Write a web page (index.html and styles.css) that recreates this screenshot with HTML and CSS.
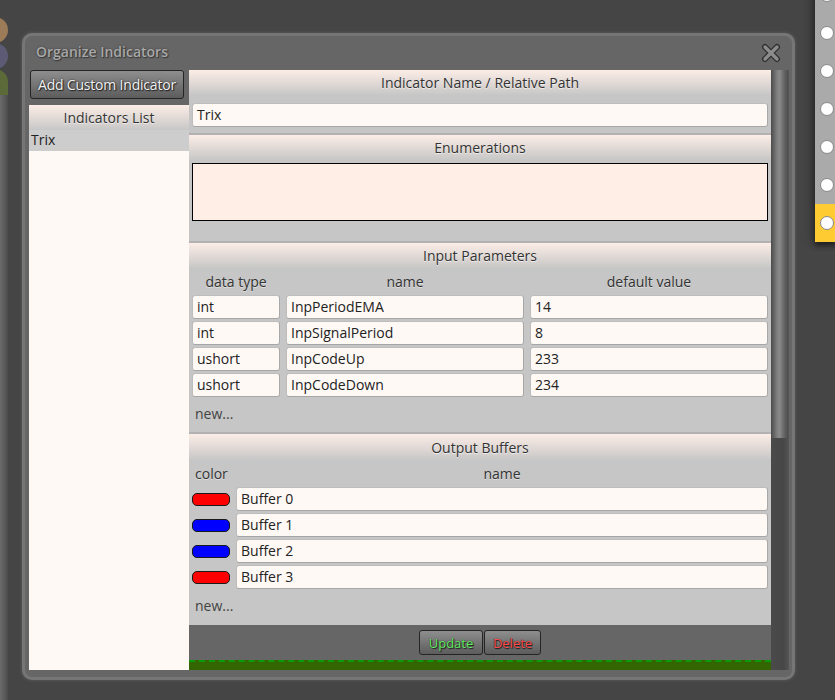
FILE: index.html
```html
<!DOCTYPE html>
<html>
<head>
<meta charset="utf-8">
<link rel="stylesheet" href="styles.css">
</head>
<body>
<div class="deco-left">
  <div class="dot dot-brown"></div>
  <div class="dot dot-purple"></div>
  <div class="dot-green"></div>
  <div class="strip-left"></div>
</div>

<div class="pins">
  <div class="pin"><span class="pin-dot"></span></div>
  <div class="pin"><span class="pin-dot"></span></div>
  <div class="pin"><span class="pin-dot"></span></div>
  <div class="pin"><span class="pin-dot"></span></div>
  <div class="pin"><span class="pin-dot"></span></div>
  <div class="pin"><span class="pin-dot"></span></div>
  <div class="pin pin-active"><span class="pin-dot"></span></div>
</div>

<div class="dialog">
  <div class="titlebar">
    <span class="title">Organize Indicators</span>
    <svg class="close" width="20" height="20" viewBox="0 0 20 20">
      <path d="M4 4 L16 16 M16 4 L4 16" stroke="#2e2e2e" stroke-width="6" stroke-linecap="round"/>
      <path d="M4 4 L16 16 M16 4 L4 16" stroke="#8c8c8c" stroke-width="3.4" stroke-linecap="round"/>
    </svg>
  </div>
  <div class="body">
    <div class="leftcol">
      <button class="btn btn-add">Add Custom Indicator</button>
      <div class="list">
        <div class="hdr">Indicators List</div>
        <div class="list-item selected">Trix</div>
      </div>
    </div>

    <div class="main">
      <div class="section s-name">
        <div class="hdr">Indicator Name / Relative Path</div>
        <div class="s-body name-body">
          <div class="field">Trix</div>
        </div>
      </div>

      <div class="section s-enum">
        <div class="hdr">Enumerations</div>
        <div class="s-body enum-body">
          <div class="enum-area"></div>
        </div>
      </div>

      <div class="section s-params">
        <div class="hdr">Input Parameters</div>
        <div class="grid3 labels">
          <span>data type</span><span>name</span><span>default value</span>
        </div>
        <div class="rows">
          <div class="grid3"><div class="field">int</div><div class="field">InpPeriodEMA</div><div class="field">14</div></div>
          <div class="grid3"><div class="field">int</div><div class="field">InpSignalPeriod</div><div class="field">8</div></div>
          <div class="grid3"><div class="field">ushort</div><div class="field">InpCodeUp</div><div class="field">233</div></div>
          <div class="grid3"><div class="field">ushort</div><div class="field">InpCodeDown</div><div class="field">234</div></div>
        </div>
        <div class="newrow">new...</div>
      </div>

      <div class="section s-buffers">
        <div class="hdr hdr-tall">Output Buffers</div>
        <div class="grid2 labels">
          <span class="lbl-left">color</span><span>name</span>
        </div>
        <div class="rows">
          <div class="grid2"><span class="swatch red"></span><div class="field">Buffer 0</div></div>
          <div class="grid2"><span class="swatch blue"></span><div class="field">Buffer 1</div></div>
          <div class="grid2"><span class="swatch blue"></span><div class="field">Buffer 2</div></div>
          <div class="grid2"><span class="swatch red"></span><div class="field">Buffer 3</div></div>
        </div>
        <div class="newrow newrow-b">new...</div>
      </div>

      <div class="footer">
        <button class="btn btn-sm btn-update">Update</button>
        <button class="btn btn-sm btn-delete">Delete</button>
      </div>
      <div class="greenbar"></div>
    </div>

    <div class="scrollbar"><div class="thumb"></div></div>
  </div>
</div>
</body>
</html>
```

FILE: styles.css
```css
* { box-sizing: border-box; }

html, body {
  margin: 0;
  padding: 0;
}

body {
  width: 835px;
  height: 700px;
  overflow: hidden;
  position: relative;
  background: #454545;
  font-family: "Open Sans", "Noto Sans", sans-serif;
  font-size: 14px;
  color: #333;
}

/* left decorations (canvas items) */
.deco-left { position: absolute; left: 0; top: 0; width: 10px; height: 700px; }
.dot { position: absolute; width: 26px; height: 26px; border-radius: 50%; left: -18px; }
.dot-brown { top: 17px; background: #9c7b58; }
.dot-purple { top: 43px; background: #5b5b75; }
.dot-green {
  position: absolute; left: -18px; top: 69px; width: 26px; height: 26px;
  border-radius: 13px 13px 0 0; background: #5b6a38;
}
.strip-left {
  position: absolute; left: 0; top: 95px; width: 8px; height: 605px;
  background: linear-gradient(to right, #6a6a6a, #5a5a5a 60%, #4a4a4a);
}

/* right pin strip */
.pins {
  position: absolute;
  left: 815px;
  top: -24px;
  width: 22px;
  background: #aaaaaa;
  box-shadow: -4px 0 8px rgba(0,0,0,0.25), 0 4px 5px rgba(0,0,0,0.45);
  display: flex;
  flex-direction: column;
}
.pin {
  height: 38px;
  display: flex;
  align-items: center;
  justify-content: center;
}
.pin-dot {
  width: 14px; height: 14px; border-radius: 50%;
  background: #fff; border: 1px solid #888;
  margin-left: 2px;
}
.pin-active { background: #fecb32; }

/* dialog window */
.dialog {
  position: absolute;
  left: 22px;
  top: 33px;
  width: 773px;
  height: 647px;
  background: #666;
  border: 3px solid #767676;
  border-radius: 10px;
  box-shadow: 0 0 3px 1px #555;
  padding: 0 3px 7px 4px;
  display: flex;
  flex-direction: column;
}

.titlebar {
  height: 34px;
  display: flex;
  align-items: center;
  justify-content: space-between;
  padding: 0 10px 0 7px;
  flex: none;
}
.title {
  color: #a8a8a8;
  font-weight: 600;
  font-size: 14px;
  text-shadow: 0 0 2px #3a3a3a, 1px 1px 1px #3a3a3a;
  margin-top: -3px;
}
.close { margin-top: 0; margin-right: -2px; }

.body {
  display: grid;
  grid-template-columns: 160px 582px 18px;
  height: 600px;
}

.leftcol {
  display: flex;
  flex-direction: column;
  gap: 6px;
  min-height: 0;
}

.btn {
  font-family: "Open Sans", "Noto Sans", sans-serif;
  border: 1px solid #252525;
  border-radius: 3px;
  background: linear-gradient(#8e8e8e, #5c5c5c);
  cursor: default;
  padding: 0;
}
.btn-add {
  margin-left: 1px;
  width: 154px;
  height: 29px;
  color: #f2f2f2;
  font-size: 14px;
  letter-spacing: -0.2px;
  text-shadow: 1px 1px 1px #222, 0 0 2px #222;
}

.list {
  flex: 1;
  background: #fff9f5;
  display: flex;
  flex-direction: column;
}
.list-item {
  height: 21px;
  line-height: 20px;
  padding-left: 2px;
  color: #222;
}
.list-item.selected { background: #cdcdcd; }

.hdr {
  height: 25px;
  flex: none;
  display: flex;
  align-items: center;
  justify-content: center;
  background: linear-gradient(#fcede6, #c7c7c7);
  color: #333;
  text-shadow: 0 1px 0 rgba(255,255,255,0.6);
}
.hdr-tall { height: 26px; }

.main {
  background: #c6c6c6;
  overflow: hidden;
  display: flex;
  flex-direction: column;
}

.section { flex: none; }
.section + .section { border-top: 2px solid #b2b2b2; }

.s-body { padding: 0 3px; }
.name-body { padding-top: 8px; padding-bottom: 6px; }
.enum-body { padding-top: 3px; padding-bottom: 20px; }

.field {
  height: 24px;
  background: #fff9f5;
  border: 1px solid #bdbdbd;
  border-bottom-color: #a6a6a6;
  border-right-color: #a8a8a8;
  border-radius: 3px;
  padding-left: 4px;
  line-height: 21px;
  color: #222;
  white-space: nowrap;
  overflow: hidden;
}

.enum-area {
  height: 58px;
  background: #ffeee6;
  border: 1px solid #000;
}

.grid3 {
  display: grid;
  grid-template-columns: 88px 238px 238px;
  column-gap: 6px;
  padding: 0 3px;
}
.grid2 {
  display: grid;
  grid-template-columns: 38px 532px;
  column-gap: 6px;
  align-items: center;
  padding: 0 3px;
}

.labels {
  height: 27px;
  align-items: center;
  text-align: center;
  color: #333;
  text-shadow: 0 1px 0 rgba(255,255,255,0.45);
}
.labels .lbl-left { text-align: left; padding-left: 3px; white-space: nowrap; }

.rows {
  display: flex;
  flex-direction: column;
  gap: 2px;
}

.newrow {
  height: 35px;
  line-height: 34px;
  padding-left: 6px;
  color: #444;
}
.newrow-b { height: 36px; line-height: 34px; }

.swatch {
  display: block;
  width: 38px;
  height: 13px;
  border-radius: 5px;
  border: 1px solid #1a1a1a;
}
.swatch.red { background: #ff0000; }
.swatch.blue { background: #0000ff; }

.footer {
  height: 35px;
  flex: none;
  background: #666;
  display: flex;
  justify-content: center;
  align-items: flex-start;
  padding-top: 5px;
  gap: 1px;
}
.btn-sm {
  height: 25px;
  font-size: 13px;
  text-shadow: 1px 1px 1px #1a1a1a, 0 0 1px #1a1a1a;
}
.btn-update { width: 64px; color: #66ee66; }
.btn-delete { width: 57px; color: #ff4c4c; }

.greenbar {
  height: 10px;
  flex: none;
  background: #336600;
  border-top: 2px dashed #0a9a0a;
}

.scrollbar {
  background: linear-gradient(to right, #4a4a4a, #474747 70%, #555 100%);
  position: relative;
}
.thumb {
  width: 17px;
  height: 368px;
  background: linear-gradient(to right, #4b4b4b, #7e7e7e 35%, #8a8a8a 50%, #626262 80%, #4e4e4e);
}
```
